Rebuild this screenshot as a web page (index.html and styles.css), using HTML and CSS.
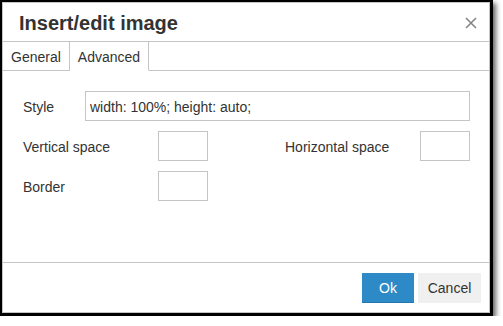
FILE: index.html
```html
<!DOCTYPE html>
<html lang="en">

<head>
    <meta charset="UTF-8">
    <meta name="viewport" content="width=device-width, initial-scale=1.0">
    <title>Insert/edit image</title>
    <link rel="stylesheet" href="styles.css">
</head>

<body>
    <div class="frame">
        <div class="dialog">
            <!-- Cabecera -->
            <div class="header">
                <h1>Insert/edit image</h1>
                <button class="close" aria-label="Close">
                    <svg width="12" height="12" viewBox="0 0 12 12">
                        <path d="M1 1 L11 11 M11 1 L1 11" stroke="#858585" stroke-width="1.6" fill="none" />
                    </svg>
                </button>
            </div>

            <!-- Pestañas -->
            <div class="tabs">
                <div class="tab">General</div>
                <div class="tab active">Advanced</div>
                <div class="tab-fill"></div>
            </div>

            <!-- Formulario -->
            <div class="body">
                <div class="row row-style">
                    <label>Style</label>
                    <input type="text" class="wide" value="width: 100%; height: auto;">
                </div>
                <div class="row row-space">
                    <label>Vertical space</label>
                    <input type="text" class="small">
                    <label class="right-label">Horizontal space</label>
                    <input type="text" class="small">
                </div>
                <div class="row row-space">
                    <label>Border</label>
                    <input type="text" class="small">
                </div>
            </div>

            <!-- Botones -->
            <div class="footer">
                <button class="btn primary">Ok</button>
                <button class="btn">Cancel</button>
            </div>
        </div>
    </div>
</body>

</html>
```

FILE: styles.css
```css
body {
    font-family: "Liberation Sans", Arial, sans-serif;
    background-color: #fff;
    margin: 0;
    padding: 0;
    color: #333;
}

.frame {
    width: 488px;
    border: 2px solid #000;
    border-right-width: 3px;
    border-bottom-width: 3px;
    box-shadow: 3px 3px 5px rgba(0, 0, 0, 0.6);
}

.dialog {
    border: 1px solid #c5c5c5;
    height: 309px;
    display: flex;
    flex-direction: column;
    background-color: #fff;
}

.header {
    height: 38px;
    border-bottom: 1px solid #c5c5c5;
    display: flex;
    align-items: center;
    justify-content: space-between;
    padding: 0 12px 0 16px;
}

h1 {
    margin: 2px 0 0 0;
    font-size: 20px;
    font-weight: bold;
    color: #333;
}

.close {
    background: none;
    border: none;
    padding: 0;
    width: 12px;
    height: 12px;
    display: flex;
    margin-top: 1px;
}

.tabs {
    display: flex;
    height: 29px;
}

.tab {
    font-size: 14px;
    padding: 2px 8px 0 8px;
    line-height: 27px;
    border-bottom: 1px solid #c5c5c5;
    border-right: 1px solid #c5c5c5;
    background-color: #fff;
}

.tab.active {
    border-bottom-color: #fff;
}

.tab-fill {
    flex: 1;
    border-bottom: 1px solid #c5c5c5;
}

.body {
    flex: 1;
    padding: 20px 19px 0 20px;
    border-bottom: 1px solid #c5c5c5;
}

.row {
    display: flex;
    align-items: center;
    margin-bottom: 10px;
    font-size: 14px;
}

.row label {
    color: #333;
    padding-top: 2px;
}

.row-style label {
    width: 62px;
}

.row-space label {
    width: 135px;
}

.row-space .right-label {
    width: 135px;
    margin-left: 77px;
}

input {
    box-sizing: border-box;
    height: 30px;
    border: 1px solid #c5c5c5;
    font-family: "Liberation Sans", Arial, sans-serif;
    font-size: 14px;
    color: #333;
    padding: 2px 4px 0 4px;
    margin: 0;
}

input.wide {
    width: 385px;
}

input.small {
    width: 50px;
}

.footer {
    height: 49px;
    display: flex;
    justify-content: flex-end;
    align-items: flex-start;
    gap: 4px;
    padding: 10px 8px 0 0;
    box-sizing: border-box;
}

.btn {
    height: 30px;
    font-family: "Liberation Sans", Arial, sans-serif;
    font-size: 14px;
    border: none;
    background-color: #f0f0f0;
    color: #333;
    padding: 0 9px;
    width: 63px;
}

.btn.primary {
    background-color: #2d8ac7;
    color: #fff;
    width: 52px;
    border-bottom: 1px solid #2277ae;
}
```
